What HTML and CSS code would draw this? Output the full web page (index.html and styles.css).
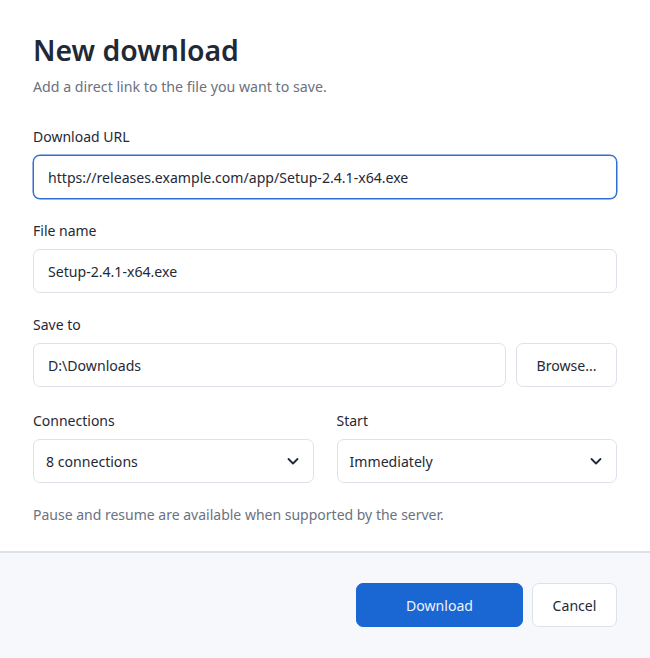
FILE: index.html
```html
<!DOCTYPE html>
<html>
<head>
<meta charset="utf-8">
<link rel="stylesheet" href="styles.css">
</head>
<body>
<div class="dialog">
  <div class="content">
    <h1 class="title">New download</h1>
    <p class="subtitle">Add a direct link to the file you want to save.</p>

    <div class="field first">
      <label class="label">Download URL</label>
      <div class="input focused">https://releases.example.com/app/Setup-2.4.1-x64.exe</div>
    </div>

    <div class="field">
      <label class="label">File name</label>
      <div class="input">Setup-2.4.1-x64.exe</div>
    </div>

    <div class="field">
      <label class="label">Save to</label>
      <div class="row">
        <div class="input grow">D:\Downloads</div>
        <button class="btn browse">Browse...</button>
      </div>
    </div>

    <div class="cols">
      <div class="col">
        <label class="label">Connections</label>
        <div class="select">
          <span>8 connections</span>
          <svg class="chev" width="14" height="14" viewBox="0 0 14 14"><path d="M2.5 5 L7 9.5 L11.5 5" fill="none" stroke="#1f2937" stroke-width="1.8" stroke-linecap="round" stroke-linejoin="round"/></svg>
        </div>
      </div>
      <div class="col">
        <label class="label">Start</label>
        <div class="select">
          <span>Immediately</span>
          <svg class="chev" width="14" height="14" viewBox="0 0 14 14"><path d="M2.5 5 L7 9.5 L11.5 5" fill="none" stroke="#1f2937" stroke-width="1.8" stroke-linecap="round" stroke-linejoin="round"/></svg>
        </div>
      </div>
    </div>

    <p class="note">Pause and resume are available when supported by the server.</p>
  </div>
  <div class="footer">
    <button class="btn primary">Download</button>
    <button class="btn cancel">Cancel</button>
  </div>
</div>
</body>
</html>
```

FILE: styles.css
```css
html, body {
  margin: 0;
  padding: 0;
  background: #ffffff;
}
body {
  font-family: "Noto Sans", "Open Sans", sans-serif;
  color: #1f2937;
  width: 650px;
  height: 658px;
  overflow: hidden;
}
.dialog {
  display: flex;
  flex-direction: column;
  height: 658px;
}
.content {
  padding: 28px 33px 26px 33px;
  flex: none;
}
.title {
  margin: 0;
  font-size: 28.4px;
  font-weight: 600;
  line-height: 44px;
  color: #1f2937;
}
.subtitle {
  margin: 5px 0 0 0;
  font-size: 14.2px;
  line-height: 20px;
  color: #6b7280;
}
.field {
  display: flex;
  flex-direction: column;
  margin-top: 22px;
}
.field.first { margin-top: 30px; }
.label {
  display: block;
  font-size: 14px;
  line-height: 20px;
  color: #1f2937;
  margin-bottom: 8px;
}
.input {
  height: 44px;
  box-sizing: border-box;
  border: 1px solid #dde2ea;
  border-radius: 7px;
  padding: 0 14px;
  display: flex;
  align-items: center;
  font-size: 14.1px;
  color: #1f2937;
  background: #fff;
}
.input.focused {
  border-color: #2f6fd0;
  box-shadow: 0 0 0 0.5px #2f6fd0;
}
.row {
  display: flex;
  gap: 10px;
}
.grow { flex: 1; }
.btn {
  font-family: inherit;
  height: 44px;
  box-sizing: border-box;
  border: 1px solid #dde2ea;
  border-radius: 7px;
  background: #fff;
  font-size: 14.1px;
  color: #1f2937;
  padding: 0;
  cursor: pointer;
}
.browse { width: 101px; }
.cols {
  display: flex;
  gap: 23px;
  margin-top: 24px;
}
.col { flex: 1; }
.select {
  height: 44px;
  box-sizing: border-box;
  border: 1px solid #dde2ea;
  border-radius: 7px;
  padding: 0 13px 0 12px;
  display: flex;
  align-items: center;
  justify-content: space-between;
  font-size: 14.1px;
  color: #1f2937;
}
.chev { display: block; }
.note {
  margin: 22px 0 0 0;
  font-size: 14px;
  line-height: 20px;
  color: #6b7280;
}
.footer {
  flex: 1;
  border-top: 2px solid #dde2ea;
  background: #f6f8fc;
  display: flex;
  justify-content: flex-end;
  align-items: flex-start;
  gap: 9px;
  padding: 30px 33px 0 0;
}
.primary {
  width: 167px;
  background: #1a66d2;
  border-color: #1a66d2;
  color: #eef3fb;
}
.cancel { width: 85px; }
```
